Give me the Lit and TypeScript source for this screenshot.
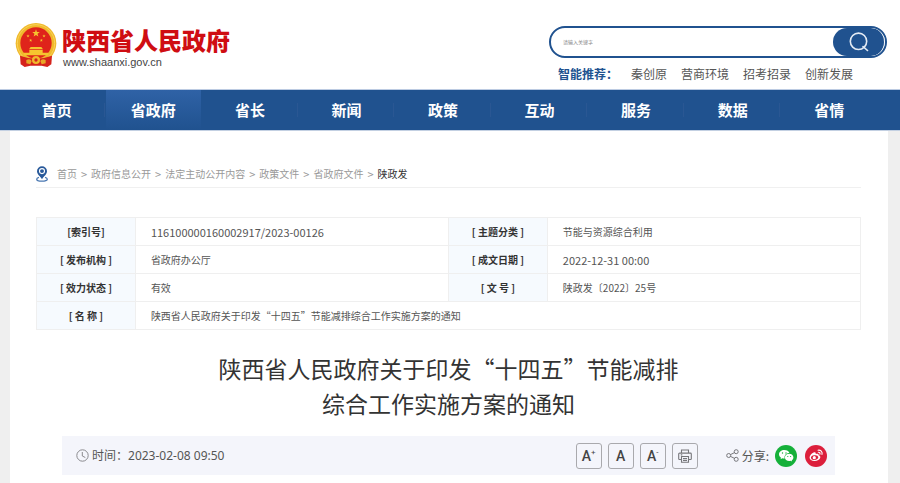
import { LitElement, html, css, svg } from "lit";
import { customElement } from "lit/decorators.js";
import { classMap } from "lit/directives/class-map.js";

const NAV = ["首页", "省政府", "省长", "新闻", "政策", "互动", "服务", "数据", "省情"];
const ACTIVE = "省政府";
const HOT = ["秦创原", "营商环境", "招考招录", "创新发展"];
const TRAIL = ["首页", "政府信息公开", "法定主动公开内容", "政策文件", "省政府文件"];

const star = (cx: number, cy: number, r: number) => {
  const pts: string[] = [];
  for (let i = 0; i < 10; i++) {
    const a = (Math.PI / 5) * i - Math.PI / 2;
    const k = i % 2 ? r * 0.4 : r;
    pts.push(`${(cx + k * Math.cos(a)).toFixed(1)},${(cy + k * Math.sin(a)).toFixed(1)}`);
  }
  return svg`<polygon points=${pts.join(" ")} fill="#f6c52f"/>`;
};

const emblem = html`<svg class="emblem" viewBox="0 0 126 132" aria-hidden="true">
  <circle cx="63" cy="61" r="61" fill="#f0b92c"/>
  <circle cx="63" cy="61" r="56" fill="none" stroke="#f9d257" stroke-width="3"/>
  <circle cx="63" cy="60" r="47" fill="#df241b"/>
  ${star(63, 31, 12)} ${star(39, 39, 5)} ${star(47, 52, 5)} ${star(79, 52, 5)} ${star(87, 39, 5)}
  <path d="M47 72h32l5 7H42z M43 81h40v8H43z M26 89h74v8H26z" fill="#f6c52f"/>
  <path d="M15 98 Q63 116 111 98 L109 124 L97 132 L80 128 H46 L29 132 L17 124Z" fill="#d5231c"/>
  <path d="M34 111 Q46 106 50 114 L46 124 L34 121Z M92 111 Q80 106 76 114 L80 124 L92 121Z" fill="#e8a626"/>
  <circle cx="63" cy="111" r="12" fill="#f0b92c"/>
  <circle cx="63" cy="111" r="5" fill="#d5231c"/>
</svg>`;

@customElement("app-root")
export class AppRoot extends LitElement {
  static styles = css`
    :host {
      display: flex;
      flex-direction: column;
      min-height: 100vh;
      background: #efefef;
      color: #555;
      font-family: "Noto Sans CJK SC", sans-serif;
      font-size: 10px;
    }
    * { box-sizing: border-box; }
    a { color: inherit; text-decoration: none; }
    svg { display: block; flex: none; }

    .head {
      display: flex;
      justify-content: space-between;
      align-items: flex-start;
      height: 90px;
      padding: 22px 13px 0 15px;
      background: #fff;
      border-bottom: 1px solid #bccbe2;
    }
    .brand { display: flex; gap: 5px; }
    .emblem { width: 42px; height: 44px; margin-top: 1px; }
    .name {
      display: block;
      margin: 4px 0 0;
      color: #cf0d12;
      font-size: 24px;
      font-weight: 900;
      line-height: 28px;
    }
    .site {
      display: block;
      padding-left: 1px;
      color: #444;
      font-family: "Liberation Sans", sans-serif;
      font-size: 11px;
      line-height: 16px;
    }
    .finder { width: 338px; padding-top: 4px; }
    .search {
      display: flex;
      height: 32px;
      border: 2px solid #20528f;
      border-radius: 16px;
      background: #fff;
      overflow: hidden;
    }
    .search input {
      flex: 1;
      min-width: 0;
      padding: 0 12px;
      border: 0;
      outline: 0;
      background: none;
      font: 5px/28px "Noto Sans CJK SC", sans-serif;
    }
    .search input::placeholder { color: #888; }
    .go {
      display: grid;
      place-items: center;
      width: 52px;
      padding: 0;
      border: 0;
      border-right: 1px solid #fff;
      border-radius: 14px;
      background: #20528f;
    }
    .hot {
      display: flex;
      gap: 14px;
      padding: 7px 0 0 9px;
      font-size: 12px;
      line-height: 18px;
      white-space: nowrap;
    }
    .hot strong { width: 59px; color: #20528f; }

    .nav {
      display: grid;
      grid-template-columns: repeat(9, 1fr);
      height: 41px;
      padding: 0 22px 0 9px;
      background: #20528f;
      border-bottom: 1px solid #c3d0e2;
      color: #fff;
      font-size: 15px;
      font-weight: 700;
      line-height: 39px;
      text-align: center;
    }
    .tab {
      margin-right: 1px;
      background: linear-gradient(#2a5793, #2a5793) right center / 1px 14px no-repeat;
    }
    .tab.on { background: linear-gradient(#2f62a6, #20528f); }
    .tab:last-child { background: none; }

    .panel {
      flex: 1;
      margin: 0 12px 0 10px;
      padding: 29px 27px 8px 26px;
      background: #fff;
    }
    .crumbs {
      display: flex;
      align-items: center;
      gap: 4px;
      height: 28px;
      border-bottom: 1px solid #f0f0f0;
      color: #999;
    }
    .pin { margin-right: 5px; }
    .sep { font-size: 11px; }
    .here { color: #333; }

    .meta {
      width: 100%;
      margin-top: 29px;
      border-collapse: collapse;
      table-layout: fixed;
    }
    .meta th, .meta td {
      height: 28px;
      padding: 0;
      border: 1px solid #efefef;
      line-height: 16px;
    }
    .meta th { background: #f6fafe; color: #333; text-align: center; font-weight: 700; }
    .meta td { padding-left: 15px; }
    .meta .num { font-size: 11px; }
    .label { width: 12%; }
    .value { width: 38%; }

    .title {
      margin: 21px 0 0;
      color: #333;
      font-size: 23px;
      font-weight: 400;
      line-height: 35px;
      text-align: center;
    }
    .bar {
      display: flex;
      justify-content: space-between;
      align-items: center;
      height: 39px;
      margin: 15px 26px 0;
      padding: 0 8px 0 14px;
      background: #f4f5fb;
      font-size: 12px;
      line-height: 20px;
    }
    .time, .tools, .share { display: flex; align-items: center; }
    .time { gap: 3px; }
    .date { font-family: "Noto Sans", "Noto Sans CJK SC", sans-serif; }
    .tools { gap: 6px; }
    .tool {
      display: grid;
      place-items: center;
      width: 26px;
      height: 26px;
      padding: 0;
      border: 1px solid #a9a9ad;
      border-radius: 3px;
      background: none;
      color: #444;
      font: 500 14px/16px Roboto, sans-serif;
    }
    .tool sup { font-size: 8px; font-weight: 400; line-height: 1px; }
    .share { gap: 3px; margin-left: 22px; }
    .share .word { margin-right: 3px; }
    .round { width: 22px; height: 22px; margin-right: 5px; }
    .round:last-child { margin-right: 0; }
  `;

  render() {
    return html`
      <header class="head">
        <a class="brand" href="#">
          ${emblem}
          <span><strong class="name">陕西省人民政府</strong><span class="site">www.shaanxi.gov.cn</span></span>
        </a>
        <div class="finder">
          <form class="search" role="search" @submit=${(e: Event) => e.preventDefault()}>
            <input type="text" aria-label="请输入关键字" placeholder="请输入关键字" />
            <button class="go" aria-label="搜索">
              <svg width="22" height="22" viewBox="0 0 22 22" fill="none" stroke="#e4ebf4" stroke-width="1.6" stroke-linecap="round">
                <circle cx="10.5" cy="10.3" r="8.2"/><path d="M15 15.5 L19.5 19.5"/>
              </svg>
            </button>
          </form>
          <div class="hot">
            <strong>智能推荐：</strong>${HOT.map((t) => html`<a href="#">${t}</a>`)}
          </div>
        </div>
      </header>
      <nav class="nav">
        ${NAV.map((t) => html`<a href="#" class=${classMap({ tab: true, on: t === ACTIVE })}>${t}</a>`)}
      </nav>
      <main class="panel">
        <nav class="crumbs">
          <svg class="pin" width="12" height="16" viewBox="0 0 12 16">
            <path d="M3 11.4C1.200 11.800.700 12.500.700 13.200c0 1.200 2.200 2 5.300 2s5.300-.8 5.300-2c0-.7-.5-1.400-2.300-1.800" fill="none" stroke="#4a78b2" stroke-width="1.300"/>
            <path d="M6 .2a5 5 0 0 0-5 5C1 8.200 4 10 6 13.200 8 10 11 8.200 11 5.200A5 5 0 0 0 6 .2z" fill="#28599a"/>
            <circle cx="6" cy="5.100" r="2.500" fill="#28599a" stroke="#fff" stroke-width="1.100"/>
          </svg>
          ${TRAIL.map((t) => html`<a href="#">${t}</a><span class="sep">&gt;</span>`)}
          <span class="here">陕政发</span>
        </nav>
        <table class="meta">
          <colgroup><col class="label" /><col class="value" /><col class="label" /><col class="value" /></colgroup>
          <tbody>
            <tr>
              <th scope="row">[索引号]</th><td class="num">116100000160002917/2023-00126</td>
              <th scope="row">[ 主题分类 ]</th><td>节能与资源综合利用</td>
            </tr>
            <tr>
              <th scope="row">[ 发布机构 ]</th><td>省政府办公厅</td>
              <th scope="row">[ 成文日期 ]</th><td class="num">2022-12-31 00:00</td>
            </tr>
            <tr>
              <th scope="row">[ 效力状态 ]</th><td>有效</td>
              <th scope="row">[ 文 号 ]</th><td>陕政发〔2022〕25号</td>
            </tr>
            <tr>
              <th scope="row">[ 名 称 ]</th><td colspan="3">陕西省人民政府关于印发“十四五”节能减排综合工作实施方案的通知</td>
            </tr>
          </tbody>
        </table>
        <h1 class="title">陕西省人民政府关于印发“十四五”节能减排<br />综合工作实施方案的通知</h1>
        <div class="bar">
          <div class="time">
            <svg width="13" height="13" viewBox="0 0 13 13" fill="none" stroke="#8a8a8e">
              <circle cx="6.500" cy="6.500" r="5.700"/><path d="M6.300 3v4l3 1.500"/>
            </svg>
            <span>时间：<time class="date">2023-02-08 09:50</time></span>
          </div>
          <div class="tools">
            <button class="tool" aria-label="放大"><span>A<sup>+</sup></span></button>
            <button class="tool" aria-label="默认字号">A</button>
            <button class="tool" aria-label="缩小"><span>A<sup>-</sup></span></button>
            <button class="tool" aria-label="打印">
              <svg width="14" height="14" viewBox="0 0 14 14" fill="none" stroke="#77777b" stroke-width="1.100">
                <path d="M3.500 4V1h7v3M3.500 10.500H1.500a.8.8 0 0 1-.8-.8V5a.9.9 0 0 1 .9-.9h10.800a.9.9 0 0 1 .9.900v4.700a.8.8 0 0 1-.8.800h-2"/>
                <path d="M3.500 7.500h7v5.700h-7zM5 9.500h4M5 11.400h4M2.800 5.900h1.500"/>
              </svg>
            </button>
            <div class="share">
              <svg width="13" height="13" viewBox="0 0 13 13" fill="none" stroke="#77777b">
                <circle cx="2.700" cy="6.500" r="2"/><circle cx="10.200" cy="2.700" r="2"/><circle cx="10.200" cy="10.300" r="2"/>
                <path d="M4.500 5.600l4-2M4.500 7.400l4 2"/>
              </svg>
              <span class="word">分享:</span>
              <a class="round" href="#" aria-label="微信">
                <svg width="22" height="22" viewBox="0 0 22 22">
                  <circle cx="11" cy="11" r="11" fill="#15b03a"/>
                  <path d="M9.300 5C6.300 5 4 6.900 4 9.300c0 1.400.8 2.600 2 3.400l-.5 1.600 1.900-1c.6.200 1.200.3 1.900.3h.4c-.9-3.100 1.600-5.500 4.700-5.500C14 6.300 11.800 5 9.300 5z" fill="#fff"/>
                  <path d="M14.200 8.800c-2.500 0-4.300 1.600-4.300 3.600s1.800 3.600 4.300 3.600c.5 0 1-.1 1.500-.2l1.400.8-.4-1.300c1.100-.7 1.700-1.700 1.700-2.900 0-2-1.800-3.600-4.200-3.600z" fill="#fff"/>
                  <g fill="#15b03a"><circle cx="7.500" cy="8" r=".7"/><circle cx="11" cy="8" r=".7"/><circle cx="12.800" cy="11.500" r=".6"/><circle cx="15.600" cy="11.500" r=".6"/></g>
                </svg>
              </a>
              <a class="round" href="#" aria-label="微博">
                <svg width="22" height="22" viewBox="0 0 22 22">
                  <circle cx="11" cy="11" r="11" fill="#dc1f3c"/>
                  <path d="M9.300 7.300c1.200-.3 1.800.5 1.400 1.700 1.800-.7 3.300-.4 2.900 1.200 1.300.4 2 1.200 1.700 2.400-.4 2-2.900 3.400-5.800 3.400-2.800 0-4.900-1.400-4.900-3.300 0-2.200 2.700-5 4.700-5.400z" fill="#fff"/>
                  <ellipse cx="9.600" cy="12.600" rx="3.700" ry="2.300" fill="#dc1f3c" transform="rotate(-8 9.600 12.600)"/>
                  <circle cx="9.300" cy="12.700" r="1.600" fill="#fff"/>
                  <path d="M13 5.200c2.700-.5 4.700 1.600 4 4.200M13.300 7.300c1.200-.2 2 .6 1.700 1.800" fill="none" stroke="#fff" stroke-width="1.100" stroke-linecap="round"/>
                </svg>
              </a>
            </div>
          </div>
        </div>
      </main>
    `;
  }
}
